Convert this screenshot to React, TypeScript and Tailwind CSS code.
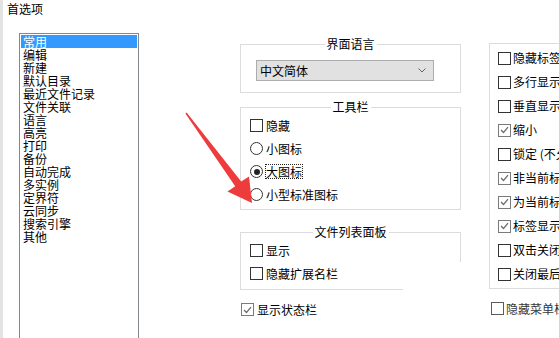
import React from "react";

const LIST_ITEMS = [
  "常用", "编辑", "新建", "默认目录", "最近文件记录", "文件关联", "语言", "高亮",
  "打印", "备份", "自动完成", "多实例", "定界符", "云同步", "搜索引擎", "其他",
];

const TAB_OPTIONS = [
  { label: "隐藏标签栏", checked: false },
  { label: "多行显示标签", checked: false },
  { label: "垂直显示标签", checked: false },
  { label: "缩小", checked: true },
  { label: "锁定 (不允许拖动)", checked: false },
  { label: "非当前标签显示关闭按钮", checked: true },
  { label: "为当前标签显示关闭按钮", checked: true },
  { label: "标签显示文件名", checked: true },
  { label: "双击关闭文档", checked: false },
  { label: "关闭最后一个标签时退出", checked: false },
];

const CheckBox = ({ checked }: { checked?: boolean }) => (
  <span
    className={
      checked
        ? "w-[13px] h-[13px] border border-[#7a7a7a] bg-white flex items-center justify-center shrink-0"
        : "w-[13px] h-[13px] border border-[#333333] bg-white flex items-center justify-center shrink-0"
    }
  >
    {checked && (
      <svg width="9" height="8" viewBox="0 0 9 8">
        <path d="M1 4 L3.5 6.5 L8 1.2" stroke="#6b6b6b" strokeWidth="1.2" fill="none" />
      </svg>
    )}
  </span>
);

const Radio = ({ checked }: { checked?: boolean }) => (
  <span className="w-[13px] h-[13px] rounded-full border border-[#333333] bg-white flex items-center justify-center shrink-0">
    {checked && <span className="w-[6px] h-[6px] rounded-full bg-[#222222]" />}
  </span>
);

const GroupHeader = ({ title }: { title: string }) => (
  <div className="flex h-[14px]">
    <div className="flex-1 h-[7px] self-end border-l border-t border-[#dcdcdc]" />
    <span className="px-[2px] leading-[14px]">{title}</span>
    <div className="flex-1 h-[7px] self-end border-r border-t border-[#dcdcdc]" />
  </div>
);

const App = () => {
  return (
    <div className="relative w-[559px] h-[338px] overflow-hidden bg-white flex text-[12px] leading-[12px] text-black font-['Noto_Sans_CJK_SC','Noto_Sans',sans-serif]">
      {/* window edge */}
      <div className="w-[3px] h-full bg-[#e3e3e3] shrink-0" />

      <div className="flex flex-col flex-1 min-w-0">
        <div className="h-[20px] pl-[4px] pt-[3px]">首选项</div>

        <div className="flex items-start">
          {/* category list */}
          <div className="ml-[16px] mt-[18px] w-[120px] h-[320px] shrink-0 border border-[#828790] bg-white p-px">
            {LIST_ITEMS.map((item, i) => (
              <div
                key={item}
                className={
                  i === 0
                    ? "h-[13px] leading-[13px] pl-[2px] bg-[#3399ff] text-white whitespace-nowrap"
                    : "h-[13px] leading-[13px] pl-[2px] whitespace-nowrap"
                }
              >
                {item}
              </div>
            ))}
          </div>

          {/* middle column */}
          <div className="ml-[101px] mt-[22px] w-[221px] shrink-0 flex flex-col">
            <GroupHeader title="界面语言" />
            <div className="border-l border-r border-b border-[#dcdcdc] pl-[15px] pt-[9px] pb-[11px]">
              <div className="w-[178px] h-[21px] bg-[#e1e1e1] border border-[#adadad] flex items-center justify-between pl-[3px] pr-[7px]">
                <span>中文简体</span>
                <svg width="8" height="5" viewBox="0 0 8 5">
                  <path d="M0.5 0.5 L4 4 L7.5 0.5" stroke="#666666" fill="none" />
                </svg>
              </div>
            </div>

            <div className="mt-[7px]">
              <GroupHeader title="工具栏" />
              <div className="border-l border-r border-b border-[#dcdcdc] pl-[9px] pb-[3px]">
                <div className="h-[23px] flex items-center gap-[3px]">
                  <CheckBox />
                  <span>隐藏</span>
                </div>
                <div className="h-[23px] flex items-center gap-[3px]">
                  <Radio />
                  <span>小图标</span>
                </div>
                <div className="h-[23px] flex items-center gap-[2px]">
                  <Radio checked />
                  <span className="border border-dotted border-[#222222] leading-[13px]">大图标</span>
                </div>
                <div className="h-[23px] flex items-center gap-[3px]">
                  <Radio />
                  <span>小型标准图标</span>
                </div>
              </div>
            </div>

            <div className="mt-[15px]">
              <GroupHeader title="文件列表面板" />
              <div className="border-l border-[#dcdcdc] pl-[9px] pb-[4px]">
                <div className="h-[23px] flex items-center gap-[3px] border-r border-[#dcdcdc]">
                  <CheckBox />
                  <span>显示</span>
                </div>
                <div className="h-[23px] flex items-center gap-[3px]">
                  <CheckBox />
                  <span>隐藏扩展名栏</span>
                </div>
              </div>
              <div className="w-[163px] border-t border-[#dcdcdc]" />
            </div>

            <div className="mt-[8px] h-[23px] pl-px flex items-center gap-[3px]">
              <CheckBox checked />
              <span>显示状态栏</span>
            </div>
          </div>

          {/* right column */}
          <div className="ml-[28px] mt-[28px] w-[200px] shrink-0 flex flex-col">
            <div className="border-l border-t border-b border-[#dcdcdc] pl-[8px] pt-[2px] pb-[2px]">
              {TAB_OPTIONS.map((opt) => (
                <div key={opt.label} className="h-[24px] flex items-center gap-[2px] whitespace-nowrap">
                  <CheckBox checked={opt.checked} />
                  <span>{opt.label}</span>
                </div>
              ))}
            </div>
            <div className="mt-[8px] h-[23px] pl-[2px] flex items-center gap-[2px] whitespace-nowrap opacity-80">
              <CheckBox />
              <span>隐藏菜单栏</span>
            </div>
          </div>
        </div>
      </div>

      {/* red annotation arrow */}
      <svg className="absolute inset-0 pointer-events-none" width="559" height="338" viewBox="0 0 559 338">
        <polygon
          points="185.4,113.4 186.6,112.6 241.2,181.6 249,176.5 252,203 227.5,191.5 235.2,186.2"
          fill="#ee3b3b"
        />
      </svg>
    </div>
  );
};

export default App;
